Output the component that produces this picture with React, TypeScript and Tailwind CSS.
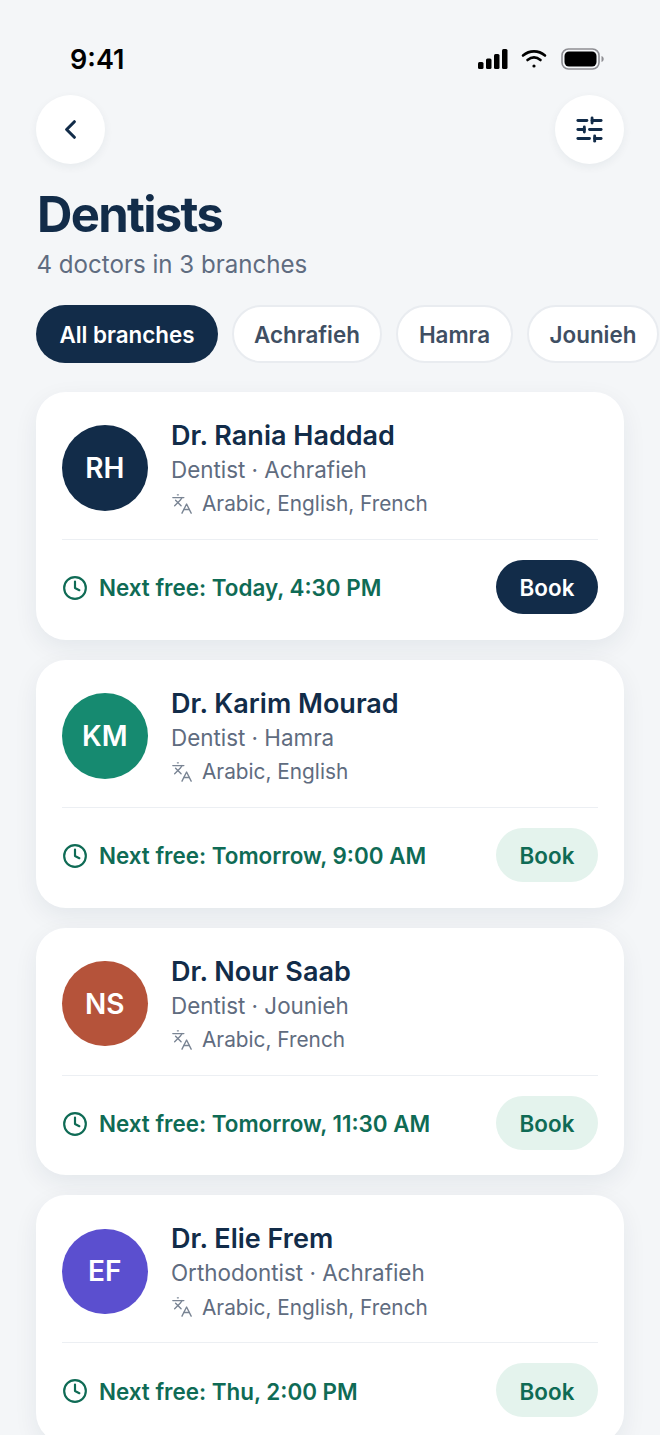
import { ChevronLeft, Clock, Languages, SlidersHorizontal } from 'lucide-react';

const doctors = [
    { initials: 'RH', name: 'Dr. Rania Haddad', role: 'Dentist · Achrafieh', langs: 'Arabic, English, French', next: 'Next free: Today, 4:30 PM', color: 'bg-[#122c49]', primary: true },
    { initials: 'KM', name: 'Dr. Karim Mourad', role: 'Dentist · Hamra', langs: 'Arabic, English', next: 'Next free: Tomorrow, 9:00 AM', color: 'bg-[#168a70]', primary: false },
    { initials: 'NS', name: 'Dr. Nour Saab', role: 'Dentist · Jounieh', langs: 'Arabic, French', next: 'Next free: Tomorrow, 11:30 AM', color: 'bg-[#b5533a]', primary: false },
    { initials: 'EF', name: 'Dr. Elie Frem', role: 'Orthodontist · Achrafieh', langs: 'Arabic, English, French', next: 'Next free: Thu, 2:00 PM', color: 'bg-[#5b4fcf]', primary: false },
];

const branches = [
    { name: 'Achrafieh', width: 'w-[150px]' },
    { name: 'Hamra', width: 'w-[117px]' },
    { name: 'Jounieh', width: 'w-[132px]' },
];

function StatusIcons() {
    return (
        <div className="flex items-center gap-[14px]">
            <svg width="30" height="20" viewBox="0 0 30 20" fill="#000">
                <rect x="0" y="13" width="5.5" height="7" rx="1.5" />
                <rect x="8" y="9.5" width="5.5" height="10.5" rx="1.5" />
                <rect x="16" y="5" width="5.5" height="15" rx="1.5" />
                <rect x="24" y="0" width="5.5" height="20" rx="1.5" />
            </svg>
            <svg width="26" height="20" viewBox="0 0 26 20" fill="none" stroke="#000" strokeWidth="2.6" strokeLinecap="round" className="-ml-[1px]">
                <path d="M2 6.5C8.5 1 17.5 1 24 6.5" />
                <path d="M6.5 11C10.5 7.8 15.5 7.8 19.5 11" />
                <circle cx="13" cy="17" r="1.6" fill="#000" stroke="none" />
            </svg>
            <svg width="44" height="22" viewBox="0 0 44 22" fill="none">
                <rect x="1" y="1" width="37" height="20" rx="6.5" stroke="#8e8e93" strokeWidth="1.6" />
                <rect x="3.5" y="3.5" width="32" height="15" rx="4.5" fill="#000" />
                <path d="M40.5 8v6c1.5-.5 2.2-1.6 2.2-3s-.7-2.5-2.2-3z" fill="#8e8e93" />
            </svg>
        </div>
    );
}

function DoctorCard({ doctor }: { doctor: (typeof doctors)[number] }) {
    return (
        <div className="shrink-0 rounded-[30px] bg-white px-[26px] pt-[26px] pb-[25.8px] shadow-[0_8px_24px_rgba(18,44,73,0.07)]">
            <div className="flex items-center gap-[23.4px] border-b border-[#eceff3] pb-[21px]">
                <div className={`flex h-[85.6px] w-[85.6px] shrink-0 items-center justify-center rounded-full text-[28px] font-semibold text-white ${doctor.color}`}>
                    {doctor.initials}
                </div>
                <div className="flex flex-col">
                    <div className="h-[35px] text-[27px] leading-[36px] font-semibold text-[#122c49]">{doctor.name}</div>
                    <div className="h-[35px] text-[22.4px] leading-[34px] text-[#5f6c80]">{doctor.role}</div>
                    <div className="flex h-[30px] items-center gap-[9px] pt-[2px] text-[20.8px] text-[#5f6c80]">
                        <Languages size={22} strokeWidth={1.5} className="text-[#7a8594]" />
                        <span>{doctor.langs}</span>
                    </div>
                </div>
            </div>
            <div className="flex items-center justify-between pt-[20px]">
                <div className="flex items-center gap-[11px] pt-[2px] text-[22.4px] font-semibold text-[#0f6b55]">
                    <Clock size={26} strokeWidth={2} />
                    <span>{doctor.next}</span>
                </div>
                <button className={`h-[54px] w-[102px] rounded-full pt-[2px] text-[22.4px] font-semibold ${doctor.primary ? 'bg-[#122c49] text-white' : 'bg-[#e4f3ed] text-[#0f6b55]'}`}>
                    Book
                </button>
            </div>
        </div>
    );
}

export default function App() {
    return (
        <div className="flex h-[1435px] w-[660px] flex-col overflow-hidden bg-[#f4f6f8] font-['Inter',sans-serif]">
            {/* Status bar */}
            <div className="flex h-[95px] shrink-0 items-start justify-between pt-[43px] pr-[56px] pl-[70px]">
                <span className="text-[27px] leading-[34px] font-semibold text-black">9:41</span>
                <div className="pt-[5px] -mr-[1px]"><StatusIcons /></div>
            </div>

            {/* Nav buttons */}
            <div className="flex shrink-0 justify-between px-[36px]">
                <button className="flex h-[69px] w-[69px] items-center justify-center rounded-full bg-white shadow-[0_3px_10px_rgba(18,44,73,0.06)]">
                    <ChevronLeft size={31} strokeWidth={2.4} className="text-[#122c49]" />
                </button>
                <button className="flex h-[69px] w-[69px] items-center justify-center rounded-full bg-white shadow-[0_3px_10px_rgba(18,44,73,0.06)]">
                    <SlidersHorizontal size={31} strokeWidth={2.2} className="text-[#122c49]" />
                </button>
            </div>

            {/* Heading */}
            <h1 className="mt-[21px] shrink-0 px-[37px] text-[49px] leading-[60px] font-bold tracking-[-1.7px] text-[#122c49]">Dentists</h1>
            <p className="mt-[4px] shrink-0 px-[37px] -indent-[0.5px] text-[24.1px] leading-[32px] text-[#5f6c80]">4 doctors in 3 branches</p>

            {/* Branch filter */}
            <div className="mt-[24px] flex shrink-0 gap-[14px] pl-[36px]">
                <div className="flex h-[58px] w-[182px] shrink-0 items-center justify-center rounded-full bg-[#122c49] pt-[2px] text-[22.4px] font-semibold text-white">All branches</div>
                {branches.map(branch => (
                    <div key={branch.name} className={`flex h-[58px] shrink-0 items-center justify-center rounded-full border-2 border-[#e9ecf0] bg-white pt-[2px] text-[22.4px] font-semibold text-[#3f4f63] ${branch.width}`}>
                        {branch.name}
                    </div>
                ))}
            </div>

            {/* Doctors */}
            <div className="mt-[29px] flex flex-col gap-[20px] px-[36px]">
                {doctors.map(doctor => <DoctorCard key={doctor.initials} doctor={doctor} />)}
            </div>
        </div>
    );
}
